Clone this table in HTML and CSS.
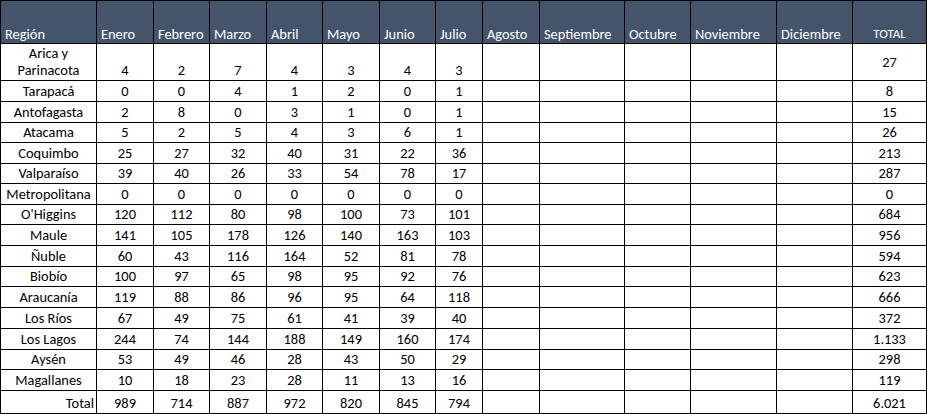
FILE: index.html
```html
<!DOCTYPE html>
<html lang="es">
<head>
<meta charset="utf-8">
<title>Tabla por región</title>
<link rel="stylesheet" href="styles.css">
</head>
<body>
<table class="sheet">
  <colgroup>
    <col class="c-reg"><col class="c57"><col class="c56"><col class="c57"><col class="c56"><col class="c57"><col class="c56"><col class="c47"><col class="c57"><col class="c85"><col class="c66"><col class="c86"><col class="c76"><col class="c74">
  </colgroup>
  <thead>
    <tr class="head">
      <th>Región</th><th>Enero</th><th>Febrero</th><th>Marzo</th><th>Abril</th><th>Mayo</th><th>Junio</th><th>Julio</th><th>Agosto</th><th>Septiembre</th><th>Octubre</th><th>Noviembre</th><th>Diciembre</th><th class="tot">TOTAL</th>
    </tr>
  </thead>
  <tbody>
    <tr class="h37"><td>Arica y Parinacota</td><td>4</td><td>2</td><td>7</td><td>4</td><td>3</td><td>4</td><td>3</td><td></td><td></td><td></td><td></td><td></td><td class="mid">27</td></tr>
    <tr class="h21"><td>Tarapacá</td><td>0</td><td>0</td><td>4</td><td>1</td><td>2</td><td>0</td><td>1</td><td></td><td></td><td></td><td></td><td></td><td>8</td></tr>
    <tr class="h21"><td>Antofagasta</td><td>2</td><td>8</td><td>0</td><td>3</td><td>1</td><td>0</td><td>1</td><td></td><td></td><td></td><td></td><td></td><td>15</td></tr>
    <tr class="h20"><td>Atacama</td><td>5</td><td>2</td><td>5</td><td>4</td><td>3</td><td>6</td><td>1</td><td></td><td></td><td></td><td></td><td></td><td>26</td></tr>
    <tr class="h21"><td>Coquimbo</td><td>25</td><td>27</td><td>32</td><td>40</td><td>31</td><td>22</td><td>36</td><td></td><td></td><td></td><td></td><td></td><td>213</td></tr>
    <tr class="h20"><td>Valparaíso</td><td>39</td><td>40</td><td>26</td><td>33</td><td>54</td><td>78</td><td>17</td><td></td><td></td><td></td><td></td><td></td><td>287</td></tr>
    <tr class="h21"><td>Metropolitana</td><td>0</td><td>0</td><td>0</td><td>0</td><td>0</td><td>0</td><td>0</td><td></td><td></td><td></td><td></td><td></td><td>0</td></tr>
    <tr class="h20"><td>O'Higgins</td><td>120</td><td>112</td><td>80</td><td>98</td><td>100</td><td>73</td><td>101</td><td></td><td></td><td></td><td></td><td></td><td>684</td></tr>
    <tr class="h21"><td>Maule</td><td>141</td><td>105</td><td>178</td><td>126</td><td>140</td><td>163</td><td>103</td><td></td><td></td><td></td><td></td><td></td><td>956</td></tr>
    <tr class="h21"><td>Ñuble</td><td>60</td><td>43</td><td>116</td><td>164</td><td>52</td><td>81</td><td>78</td><td></td><td></td><td></td><td></td><td></td><td>594</td></tr>
    <tr class="h20"><td>Biobío</td><td>100</td><td>97</td><td>65</td><td>98</td><td>95</td><td>92</td><td>76</td><td></td><td></td><td></td><td></td><td></td><td>623</td></tr>
    <tr class="h21"><td>Araucanía</td><td>119</td><td>88</td><td>86</td><td>96</td><td>95</td><td>64</td><td>118</td><td></td><td></td><td></td><td></td><td></td><td>666</td></tr>
    <tr class="h21"><td>Los Ríos</td><td>67</td><td>49</td><td>75</td><td>61</td><td>41</td><td>39</td><td>40</td><td></td><td></td><td></td><td></td><td></td><td>372</td></tr>
    <tr class="h21"><td>Los Lagos</td><td>244</td><td>74</td><td>144</td><td>188</td><td>149</td><td>160</td><td>174</td><td></td><td></td><td></td><td></td><td></td><td>1.133</td></tr>
    <tr class="h20"><td>Aysén</td><td>53</td><td>49</td><td>46</td><td>28</td><td>43</td><td>50</td><td>29</td><td></td><td></td><td></td><td></td><td></td><td>298</td></tr>
    <tr class="h21"><td>Magallanes</td><td>10</td><td>18</td><td>23</td><td>28</td><td>11</td><td>13</td><td>16</td><td></td><td></td><td></td><td></td><td></td><td>119</td></tr>
    <tr class="h23 total"><td>Total</td><td>989</td><td>714</td><td>887</td><td>972</td><td>820</td><td>845</td><td>794</td><td></td><td></td><td></td><td></td><td></td><td>6.021</td></tr>
  </tbody>
</table>
</body>
</html>
```

FILE: styles.css
```css
html, body {
  margin: 0;
  padding: 0;
  background: #ffffff;
}

body {
  font-family: Carlito, Lato, "Liberation Sans", sans-serif;
  font-size: 14.4px;
  color: #000000;
}

.sheet {
  table-layout: fixed;
  border-collapse: separate;
  border-spacing: 0;
  width: 927px;
  border-left: 1px solid #000;
  border-top: 1px solid #000;
}

.c-reg { width: 96px; }
.c47 { width: 47px; }
.c56 { width: 56px; }
.c57 { width: 57px; }
.c66 { width: 66px; }
.c74 { width: 74px; }
.c76 { width: 76px; }
.c85 { width: 85px; }
.c86 { width: 86px; }

.sheet th,
.sheet td {
  box-sizing: border-box;
  border-right: 1px solid #000;
  border-bottom: 1px solid #000;
  padding: 0 2px 1px 2px;
  vertical-align: bottom;
  white-space: nowrap;
  overflow: hidden;
  line-height: 18px;
}

.head {
  height: 43px;
}

.head th {
  background: #44546a;
  color: #ffffff;
  font-weight: normal;
  text-align: left;
  padding-left: 4px;
  padding-right: 0;
  padding-bottom: 0;
}

.head th.tot {
  text-align: center;
  font-size: 13px;
  padding-left: 2px;
  padding-right: 2px;
}

.sheet td {
  text-align: center;
}

.sheet tr.h37 td {
  line-height: 17px;
}

.sheet tr.h37 td:first-child {
  white-space: normal;
  padding-left: 6px;
  padding-right: 6px;
}

.sheet td.mid {
  vertical-align: middle;
  padding-bottom: 0;
}

.h37 { height: 37px; }
.h20 { height: 20px; }
.h21 { height: 21px; }
.h23 { height: 23px; }

.total td:first-child {
  text-align: right;
}
```
